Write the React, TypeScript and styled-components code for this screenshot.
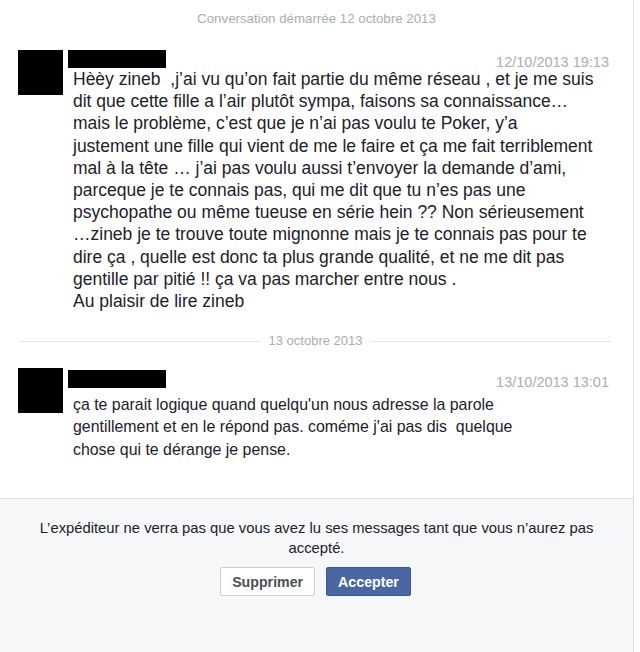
import React from "react";
import styled, { createGlobalStyle } from "styled-components";

const Global = createGlobalStyle`
  html, body { margin: 0; padding: 0; background: #ffffff; }
  body { font-family: "Liberation Sans", Arial, Helvetica, sans-serif; }
`;

const Page = styled.div`
  width: 640px;
  height: 652px;
  display: flex;
  background: #ffffff;
`;

const Panel = styled.div`
  width: 633px;
  height: 652px;
  border-right: 1px solid #dcdee2;
  display: flex;
  flex-direction: column;
`;

const Thread = styled.div`
  height: 499px;
  border-bottom: 1px solid #d8dadf;
  box-sizing: border-box;
  display: flex;
  flex-direction: column;
`;

const StartNote = styled.div`
  padding-top: 11px;
  height: 39px;
  box-sizing: border-box;
  text-align: center;
  font-size: 13.3px;
  line-height: 16px;
  color: #a9adb3;
`;

const Message = styled.div<{ $top: number }>`
  display: flex;
  padding-left: 18px;
  padding-right: 24px;
  margin-top: ${(p) => p.$top}px;
`;

const Avatar = styled.div`
  width: 45px;
  height: 45px;
  background: #000;
  flex-shrink: 0;
`;

const Body = styled.div`
  flex: 1;
  margin-left: 5px;
  display: flex;
  flex-direction: column;
`;

const Header = styled.div<{ $drop: number }>`
  display: flex;
  justify-content: space-between;
  align-items: flex-start;
  height: 18px;
  margin-top: ${(p) => p.$drop}px;
`;

const NameBar = styled.div`
  width: 98px;
  height: 18px;
  background: #000;
`;

const Stamp = styled.div`
  margin-top: 4px;
  font-size: 14.5px;
  line-height: 16px;
  color: #a9adb3;
`;

const Text = styled.div<{ $gap: number; $size: number }>`
  padding-left: 5px;
  margin-top: ${(p) => p.$gap}px;
  font-size: ${(p) => p.$size}px;
  line-height: 22.2px;
  color: #1d2129;
  white-space: pre;
`;

const Divider = styled.div`
  display: flex;
  align-items: center;
  gap: 8px;
  margin: 21px 22px 0 20px;
  font-size: 13px;
  line-height: 16px;
  color: #a9adb3;
  &::before, &::after {
    content: "";
    flex: 1;
    height: 1px;
    background: #e2e4e8;
  }
`;

const Footer = styled.div`
  flex: 1;
  background: #f6f7f9;
  display: flex;
  flex-direction: column;
  align-items: center;
  padding-top: 19px;
`;

const Notice = styled.div`
  width: 600px;
  text-align: center;
  font-size: 14.8px;
  line-height: 20px;
  color: #1d2129;
`;

const Actions = styled.div`
  display: flex;
  gap: 11px;
  margin-top: 9px;
  margin-left: -2px;
`;

const Button = styled.button<{ $primary?: boolean }>`
  height: 29px;
  padding: 0 11px;
  border-radius: 2px;
  font-family: "Liberation Sans", Arial, Helvetica, sans-serif;
  font-size: 14.2px;
  font-weight: bold;
  cursor: pointer;
  border: 1px solid ${(p) => (p.$primary ? "#3b5998" : "#ccd0d5")};
  background: ${(p) => (p.$primary ? "#4a66a3" : "#ffffff")};
  color: ${(p) => (p.$primary ? "#ffffff" : "#4b4f56")};
`;

const msg1 = [
  "Hèèy zineb  ,j’ai vu qu’on fait partie du même réseau , et je me suis",
  "dit que cette fille a l’air plutôt sympa, faisons sa connaissance…",
  "mais le problème, c’est que je n’ai pas voulu te Poker, y’a",
  "justement une fille qui vient de me le faire et ça me fait terriblement",
  "mal à la tête … j’ai pas voulu aussi t’envoyer la demande d’ami,",
  "parceque je te connais pas, qui me dit que tu n’es pas une",
  "psychopathe ou même tueuse en série hein ?? Non sérieusement",
  "…zineb je te trouve toute mignonne mais je te connais pas pour te",
  "dire ça , quelle est donc ta plus grande qualité, et ne me dit pas",
  "gentille par pitié !! ça va pas marcher entre nous .",
  "Au plaisir de lire zineb",
].join("\n");

const msg2 = [
  "ça te parait logique quand quelqu'un nous adresse la parole",
  "gentillement et en le répond pas. coméme j'ai pas dis  quelque",
  "chose qui te dérange je pense.",
].join("\n");

export default function App() {
  return (
    <>
      <Global />
      <Page>
        <Panel>
          <Thread>
            <StartNote>Conversation démarrée 12 octobre 2013</StartNote>
            <Message $top={11}>
              <Avatar />
              <Body>
                <Header $drop={0}>
                  <NameBar />
                  <Stamp>12/10/2013 19:13</Stamp>
                </Header>
                <Text $gap={0} $size={17.5}>{msg1}</Text>
              </Body>
            </Message>
            <Divider>13 octobre 2013</Divider>
            <Message $top={19}>
              <Avatar />
              <Body>
                <Header $drop={2}>
                  <NameBar />
                  <Stamp>13/10/2013 13:01</Stamp>
                </Header>
                <Text $gap={6} $size={15.9}>{msg2}</Text>
              </Body>
            </Message>
          </Thread>
          <Footer>
            <Notice>
              L’expéditeur ne verra pas que vous avez lu ses messages tant que vous n’aurez pas accepté.
            </Notice>
            <Actions>
              <Button>Supprimer</Button>
              <Button $primary>Accepter</Button>
            </Actions>
          </Footer>
        </Panel>
      </Page>
    </>
  );
}
